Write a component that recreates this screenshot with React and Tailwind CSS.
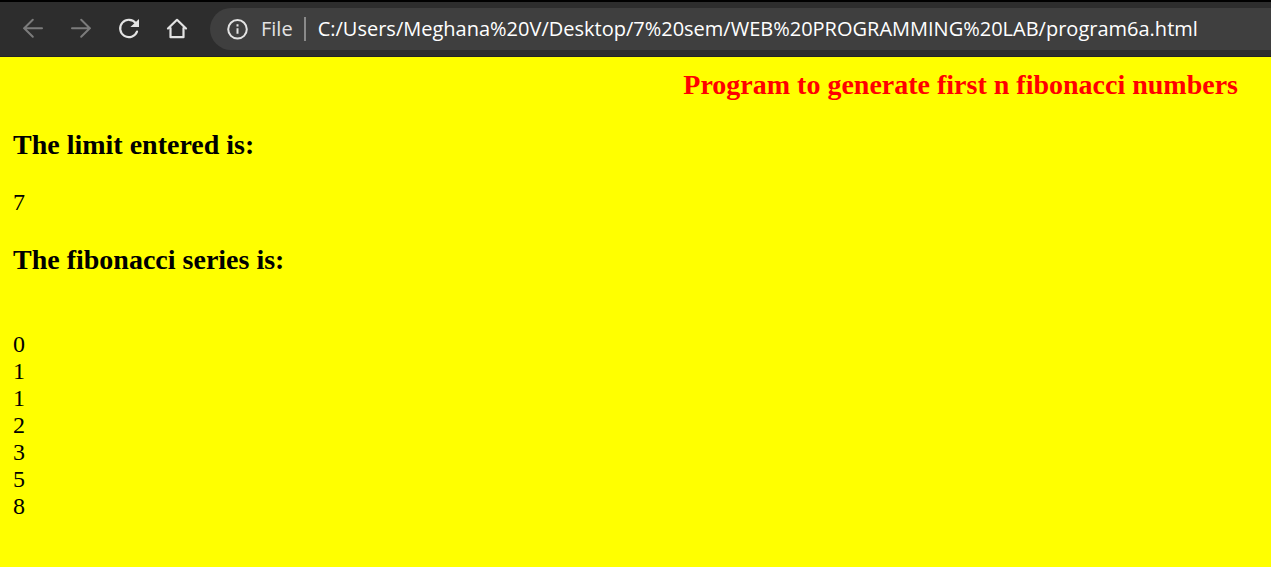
const series = [0, 1, 1, 2, 3, 5, 8];

function NavButton({ label, disabled, children }) {
  return (
    <button
      type="button"
      aria-label={label}
      disabled={disabled}
      className="flex size-6 items-center justify-center text-[#e3e3e3] disabled:text-[#7b7b7b]"
    >
      <svg
        viewBox="0 0 24 24"
        className="size-6"
        fill="none"
        stroke="currentColor"
        strokeWidth="2"
        strokeLinecap="round"
        strokeLinejoin="round"
        aria-hidden="true"
      >
        {children}
      </svg>
    </button>
  );
}

function Toolbar() {
  return (
    <header className="flex items-center border-t-2 border-b border-t-black border-b-[#242424] bg-[#2d2d2d] py-1.5 pl-[21px] font-['Open_Sans','Noto_Sans',sans-serif]">
      <nav className="flex gap-6 pr-[21px]">
        <NavButton label="Back" disabled>
          <path d="M21 11.200H3M11.800 2.700L3.200 11.200l8.600 8.600" />
        </NavButton>
        <NavButton label="Forward" disabled>
          <path d="M3 11.200h18M12.200 2.700l8.600 8.500-8.600 8.600" />
        </NavButton>
        <NavButton label="Refresh">
          <path d="M18.800 6.200A8.700 8.700 0 1 0 20 14.600" strokeWidth="2.200" />
          <path d="M22 2v8h-8.600z" fill="currentColor" stroke="none" />
        </NavButton>
        <NavButton label="Home">
          <path d="M3 11.500L12 2.800l9 8.700M5.500 11v9.200h13V11" strokeWidth="2.200" />
        </NavButton>
      </nav>
      <div className="flex h-[42px] min-w-0 flex-1 items-center rounded-l-full bg-[#3f3f3f] pl-4">
        <svg
          viewBox="0 0 24 24"
          className="size-6 shrink-0 text-[#e3e3e3]"
          fill="none"
          stroke="currentColor"
          strokeWidth="2"
          aria-hidden="true"
        >
          <circle cx="11.500" cy="12.300" r="9.300" />
          <path d="M11.500 11.200v5.600M11.500 7.300v2.200" />
        </svg>
        <label htmlFor="address" className="ml-[11px] text-xl text-[#e3e3e3]">
          File
        </label>
        <span className="mr-3 ml-[11px] h-6 w-0.5 shrink-0 bg-[#8a8a8a]" />
        <input
          id="address"
          type="text"
          spellCheck={false}
          defaultValue="C:/Users/Meghana%20V/Desktop/7%20sem/WEB%20PROGRAMMING%20LAB/program6a.html"
          className="min-w-0 flex-1 bg-transparent text-xl text-white outline-none"
        />
      </div>
    </header>
  );
}

export default function App() {
  return (
    <div className="flex min-h-screen flex-col bg-[#ffff00]">
      <Toolbar />
      <main className="flex flex-col gap-7 px-[13px] py-3 font-['Liberation_Serif',serif] text-2xl/[27px] text-black">
        <h1 className="pr-5 text-right text-[28px]/8 font-bold text-[#ff0000]">
          Program to generate first n fibonacci numbers
        </h1>
        <h2 className="text-[28px]/8 font-bold">The limit entered is:</h2>
        <p>7</p>
        <h2 className="text-[28px]/8 font-bold">The fibonacci series is:</h2>
        <ul className="pt-[27px]">
          {series.map((value, index) => (
            <li key={index}>{value}</li>
          ))}
        </ul>
      </main>
    </div>
  );
}
